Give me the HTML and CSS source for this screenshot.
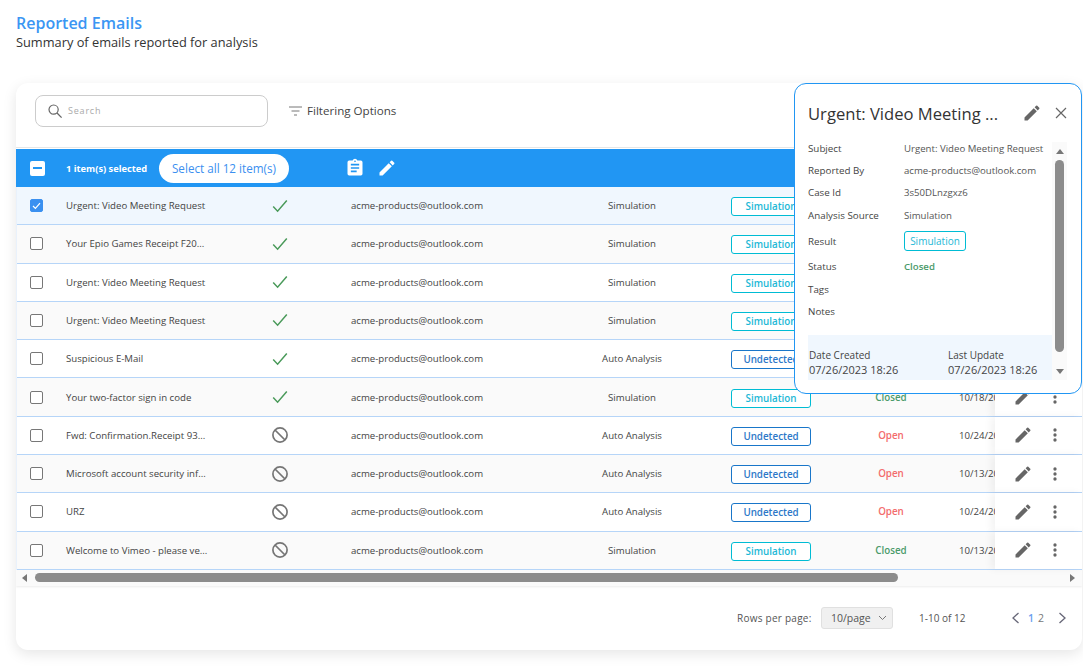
FILE: index.html
```html
<!DOCTYPE html>
<html lang="en">
<head>
<meta charset="utf-8">
<title>Reported Emails</title>
<link rel="stylesheet" href="styles.css">
</head>
<body>
<svg class="defs" width="0" height="0">
  <symbol id="i-pencil" viewBox="0 0 24 24"><path d="M3 17.25V21h3.75L17.81 9.94l-3.75-3.75L3 17.25zM20.71 7.04a1 1 0 0 0 0-1.41l-2.34-2.34a1 1 0 0 0-1.41 0l-1.83 1.83 3.75 3.75 1.83-1.83z"/></symbol>
  <symbol id="i-dots" viewBox="0 0 24 24"><path d="M12 8a2 2 0 1 0 0-4 2 2 0 0 0 0 4zm0 2a2 2 0 1 0 0 4 2 2 0 0 0 0-4zm0 6a2 2 0 1 0 0 4 2 2 0 0 0 0-4z"/></symbol>
  <symbol id="i-check" viewBox="0 0 16 14"><path d="M1.2 7.6l4.4 4.6L14.8 1.4" fill="none" stroke="#4a9a5a" stroke-width="1.5"/></symbol>
  <symbol id="i-block" viewBox="0 0 18 18"><circle cx="9" cy="9" r="7.1" fill="none" stroke="#757575" stroke-width="1.7"/><path d="M4 4l10 10" stroke="#757575" stroke-width="1.7"/></symbol>
</svg>
<header class="page-head">
  <h1>Reported Emails</h1>
  <p>Summary of emails reported for analysis</p>
</header>
<main class="card">
  <div class="toolbar">
    <div class="search">
      <svg width="16" height="16" viewBox="0 0 16 16"><circle cx="6.6" cy="6.6" r="4.6" fill="none" stroke="#666" stroke-width="1.2"/><path d="M10 10l4.6 4.6" stroke="#666" stroke-width="1.3"/></svg>
      <span>Search</span>
    </div>
    <div class="filter">
      <svg width="13" height="10" viewBox="0 0 13 10"><path d="M0 1h13M2.5 5h8M5 9h3" stroke="#777" stroke-width="1"/></svg>
      <span>Filtering Options</span>
    </div>
  </div>
  <div class="bulk">
    <span class="bulk-box"><i></i></span>
    <span class="bulk-count">1 item(s) selected</span>
    <button class="pill">Select all 12 item(s)</button>
    <svg class="bulk-clip" width="20" height="20" viewBox="0 0 24 24" fill="#fff"><path d="M19 3h-4.18A3 3 0 0 0 12 1a3 3 0 0 0-2.82 2H5a2 2 0 0 0-2 2v14a2 2 0 0 0 2 2h14a2 2 0 0 0 2-2V5a2 2 0 0 0-2-2zm-7 0a1 1 0 1 1 0 2 1 1 0 0 1 0-2zm2 14H7v-2h7v2zm3-4H7v-2h10v2zm0-4H7V7h10v2z"/></svg>
    <svg class="bulk-pen" width="20" height="20" fill="#fff"><use href="#i-pencil"/></svg>
  </div>
  <div class="rows">
    <div class="row selected">
      <span class="c-box"><span class="box on"><svg width="9" height="8" viewBox="0 0 9 8"><path d="M1 4l2.4 2.4L8 1.2" fill="none" stroke="#fff" stroke-width="1.2"/></svg></span></span>
      <span class="c-subject">Urgent: Video Meeting Request</span>
      <span class="c-flag"><svg width="16" height="14"><use href="#i-check"/></svg></span>
      <span class="c-mail">acme-products@outlook.com</span>
      <span class="c-source">Simulation</span>
      <span class="c-result"><b class="badge sim">Simulation</b></span>
      <span class="c-status closed">Closed</span>
      <span class="c-date">10/18/2023</span>
      <span class="c-act"><svg width="20" height="20"><use href="#i-pencil"/></svg><svg width="20" height="20"><use href="#i-dots"/></svg></span>
    </div>
    <div class="row">
      <span class="c-box"><span class="box"></span></span>
      <span class="c-subject">Your Epio Games Receipt F20...</span>
      <span class="c-flag"><svg width="16" height="14"><use href="#i-check"/></svg></span>
      <span class="c-mail">acme-products@outlook.com</span>
      <span class="c-source">Simulation</span>
      <span class="c-result"><b class="badge sim">Simulation</b></span>
      <span class="c-status closed">Closed</span>
      <span class="c-date">10/18/2023</span>
      <span class="c-act"><svg width="20" height="20"><use href="#i-pencil"/></svg><svg width="20" height="20"><use href="#i-dots"/></svg></span>
    </div>
    <div class="row">
      <span class="c-box"><span class="box"></span></span>
      <span class="c-subject">Urgent: Video Meeting Request</span>
      <span class="c-flag"><svg width="16" height="14"><use href="#i-check"/></svg></span>
      <span class="c-mail">acme-products@outlook.com</span>
      <span class="c-source">Simulation</span>
      <span class="c-result"><b class="badge sim">Simulation</b></span>
      <span class="c-status closed">Closed</span>
      <span class="c-date">10/18/2023</span>
      <span class="c-act"><svg width="20" height="20"><use href="#i-pencil"/></svg><svg width="20" height="20"><use href="#i-dots"/></svg></span>
    </div>
    <div class="row">
      <span class="c-box"><span class="box"></span></span>
      <span class="c-subject">Urgent: Video Meeting Request</span>
      <span class="c-flag"><svg width="16" height="14"><use href="#i-check"/></svg></span>
      <span class="c-mail">acme-products@outlook.com</span>
      <span class="c-source">Simulation</span>
      <span class="c-result"><b class="badge sim">Simulation</b></span>
      <span class="c-status closed">Closed</span>
      <span class="c-date">10/18/2023</span>
      <span class="c-act"><svg width="20" height="20"><use href="#i-pencil"/></svg><svg width="20" height="20"><use href="#i-dots"/></svg></span>
    </div>
    <div class="row">
      <span class="c-box"><span class="box"></span></span>
      <span class="c-subject">Suspicious E-Mail</span>
      <span class="c-flag"><svg width="16" height="14"><use href="#i-check"/></svg></span>
      <span class="c-mail">acme-products@outlook.com</span>
      <span class="c-source">Auto Analysis</span>
      <span class="c-result"><b class="badge und">Undetected</b></span>
      <span class="c-status closed">Closed</span>
      <span class="c-date">10/18/2023</span>
      <span class="c-act"><svg width="20" height="20"><use href="#i-pencil"/></svg><svg width="20" height="20"><use href="#i-dots"/></svg></span>
    </div>
    <div class="row">
      <span class="c-box"><span class="box"></span></span>
      <span class="c-subject">Your two-factor sign in code</span>
      <span class="c-flag"><svg width="16" height="14"><use href="#i-check"/></svg></span>
      <span class="c-mail">acme-products@outlook.com</span>
      <span class="c-source">Simulation</span>
      <span class="c-result"><b class="badge sim">Simulation</b></span>
      <span class="c-status closed">Closed</span>
      <span class="c-date">10/18/2023</span>
      <span class="c-act"><svg width="20" height="20"><use href="#i-pencil"/></svg><svg width="20" height="20"><use href="#i-dots"/></svg></span>
    </div>
    <div class="row">
      <span class="c-box"><span class="box"></span></span>
      <span class="c-subject">Fwd: Confirmation.Receipt 93...</span>
      <span class="c-flag"><svg width="18" height="18"><use href="#i-block"/></svg></span>
      <span class="c-mail">acme-products@outlook.com</span>
      <span class="c-source">Auto Analysis</span>
      <span class="c-result"><b class="badge und">Undetected</b></span>
      <span class="c-status open">Open</span>
      <span class="c-date">10/24/2023</span>
      <span class="c-act"><svg width="20" height="20"><use href="#i-pencil"/></svg><svg width="20" height="20"><use href="#i-dots"/></svg></span>
    </div>
    <div class="row">
      <span class="c-box"><span class="box"></span></span>
      <span class="c-subject">Microsoft account security inf...</span>
      <span class="c-flag"><svg width="18" height="18"><use href="#i-block"/></svg></span>
      <span class="c-mail">acme-products@outlook.com</span>
      <span class="c-source">Auto Analysis</span>
      <span class="c-result"><b class="badge und">Undetected</b></span>
      <span class="c-status open">Open</span>
      <span class="c-date">10/13/2023</span>
      <span class="c-act"><svg width="20" height="20"><use href="#i-pencil"/></svg><svg width="20" height="20"><use href="#i-dots"/></svg></span>
    </div>
    <div class="row">
      <span class="c-box"><span class="box"></span></span>
      <span class="c-subject">URZ</span>
      <span class="c-flag"><svg width="18" height="18"><use href="#i-block"/></svg></span>
      <span class="c-mail">acme-products@outlook.com</span>
      <span class="c-source">Auto Analysis</span>
      <span class="c-result"><b class="badge und">Undetected</b></span>
      <span class="c-status open">Open</span>
      <span class="c-date">10/24/2023</span>
      <span class="c-act"><svg width="20" height="20"><use href="#i-pencil"/></svg><svg width="20" height="20"><use href="#i-dots"/></svg></span>
    </div>
    <div class="row">
      <span class="c-box"><span class="box"></span></span>
      <span class="c-subject">Welcome to Vimeo - please ve...</span>
      <span class="c-flag"><svg width="18" height="18"><use href="#i-block"/></svg></span>
      <span class="c-mail">acme-products@outlook.com</span>
      <span class="c-source">Simulation</span>
      <span class="c-result"><b class="badge sim">Simulation</b></span>
      <span class="c-status closed">Closed</span>
      <span class="c-date">10/13/2023</span>
      <span class="c-act"><svg width="20" height="20"><use href="#i-pencil"/></svg><svg width="20" height="20"><use href="#i-dots"/></svg></span>
    </div>
  </div>
  <div class="hscroll">
    <i class="arrow-l"></i>
    <span class="hthumb"></span>
    <i class="arrow-r"></i>
  </div>
  <footer class="pager">
    <span class="rpp">Rows per page:</span>
    <span class="select">10/page<svg width="9" height="6" viewBox="0 0 9 6"><path d="M1 1l3.5 3.5L8 1" fill="none" stroke="#777" stroke-width="1"/></svg></span>
    <span class="range">1-10 of 12</span>
    <svg class="chev-l" width="9" height="12" viewBox="0 0 9 12"><path d="M7.5 1L2 6l5.5 5" fill="none" stroke="#667" stroke-width="1.3"/></svg>
    <span class="pg cur">1</span>
    <span class="pg">2</span>
    <svg class="chev-r" width="9" height="12" viewBox="0 0 9 12"><path d="M1.5 1L7 6l-5.5 5" fill="none" stroke="#667" stroke-width="1.3"/></svg>
  </footer>
</main>
<aside class="pop">
  <div class="pop-head">
    <h2>Urgent: Video Meeting ...</h2>
    <svg class="pop-pen" width="20" height="20"><use href="#i-pencil"/></svg>
    <svg class="pop-x" width="12" height="12" viewBox="0 0 12 12"><path d="M1 1l10 10M11 1L1 11" stroke="#666" stroke-width="1.2"/></svg>
  </div>
  <div class="pop-body">
    <div class="pop-main">
      <dl class="info">
        <dt>Subject</dt><dd>Urgent: Video Meeting Request</dd>
        <dt>Reported By</dt><dd>acme-products@outlook.com</dd>
        <dt>Case Id</dt><dd>3s50DLnzgxz6</dd>
        <dt>Analysis Source</dt><dd>Simulation</dd>
        <dt>Result</dt><dd><b class="badge mini">Simulation</b></dd>
        <dt>Status</dt><dd class="closed">Closed</dd>
        <dt>Tags</dt><dd></dd>
        <dt>Notes</dt><dd></dd>
      </dl>
      <div class="dates">
        <div class="date-col"><span>Date Created</span><span class="val">07/26/2023 18:26</span></div>
        <div class="date-col"><span>Last Update</span><span class="val">07/26/2023 18:26</span></div>
      </div>
    </div>
    <div class="vscroll"><i class="arrow-u"></i><span class="vthumb"></span><i class="arrow-d"></i></div>
  </div>
</aside>
</body>
</html>
```
FILE: styles.css
```css
* { box-sizing: border-box; }
html, body { margin: 0; height: 669px; overflow: hidden; }
body { position: relative; background: #fff; font-family: "Open Sans", "Liberation Sans", sans-serif; color: #444; font-size: 9.65px; }
.defs { position: absolute; }
.page-head { padding: 14px 16px 0; height: 83px; }
.page-head h1 { margin: 0; font-size: 16px; line-height: 19px; font-weight: 600; color: #3b96f3; }
.page-head p { margin: 0; font-size: 12.8px; line-height: 19px; color: #333; }
.card { margin-left: 16px; width: 1066px; height: 567px; background: #fff; border-radius: 12px; box-shadow: 0 4px 14px rgba(0,0,0,.1); overflow: hidden; }
.toolbar { height: 65px; display: flex; align-items: center; padding: 0 0 9px 19px; border-bottom: 1px solid #e6e6e6; }
.search { width: 233px; height: 32px; border: 1px solid #ccc; border-radius: 8px; display: flex; align-items: center; gap: 5px; padding-left: 11px; color: #aaa; font-size: 9px; letter-spacing: .8px; }
.filter { margin-left: 21px; display: flex; align-items: center; gap: 5px; color: #444; font-size: 11.6px; font-weight: 500; }
.bulk { margin-top: 1px; height: 38px; background: #2196f3; display: flex; align-items: center; color: #fff; padding-left: 14px; }
.bulk-box { width: 15px; height: 15px; background: #fff; border-radius: 2px; display: flex; align-items: center; justify-content: center; }
.bulk-box i { width: 9px; height: 1.5px; background: #2196f3; }
.bulk-count { margin-left: 21px; font-weight: 700; font-size: 9.3px; width: 93px; }
.pill { border: 0; height: 29px; width: 130px; border-radius: 15px; background: #fff; color: #3b8ff0; font: 500 11.7px "Open Sans", sans-serif; padding: 0; }
.bulk-clip { margin-left: 56px; }
.bulk-pen { margin-left: 12px; }
.rows { display: flex; flex-direction: column; border-left: 1px solid #e9f1fb; margin-top: -0.1px; }
.row { height: 38.3px; flex: none; display: grid; grid-template-columns: 49px 184px 60px 261px 122px 158px 80px 64px 87px; align-items: center; background: #fff; border-bottom: 1px solid #b6d5f8; }
.row:nth-child(even) { background: #fafafa; }
.row.selected { background: #f0f7fe; }
.c-box { display: flex; justify-content: center; padding-right: 11px; }
.box { width: 13px; height: 13px; border: 1px solid #777; border-radius: 2px; background: #fff; display: flex; align-items: center; justify-content: center; }
.box.on { background: #3a90f0; border-color: #3a90f0; }
.c-flag { display: flex; justify-content: center; }
.c-mail { padding-left: 41px; }
.c-source { text-align: center; }
.c-result { padding: 2px 0 0 38px; display: flex; }
.badge { display: inline-block; width: 80px; height: 19px; line-height: 17px; border-radius: 3px; text-align: center; border: 1px solid; font-weight: 600; background: #fff; font-size: 9.8px; }
.sim { color: #1db8d6; border-color: #00bcd4; }
.und { color: #2d78c8; border-color: #1976c9; }
.c-status { text-align: center; font-weight: 600; font-size: 9.8px; }
.closed { color: #4b9a6a; }
.open { color: #f36c6c; }
.c-date { padding-left: 28px; white-space: nowrap; overflow: hidden; }
.c-act { height: 100%; background: #fff; box-shadow: -4px 0 8px rgba(0,0,0,.05); display: flex; align-items: center; padding-left: 18px; gap: 12px; fill: #666; }
.hscroll { height: 16px; background: #fafafa; display: flex; align-items: center; padding-left: 6px; box-shadow: 0 1px 2px rgba(0,0,0,.08); }
.arrow-l { width: 0; height: 0; border: 4px solid transparent; border-left: 0; border-right: 5px solid #777; }
.arrow-r { width: 0; height: 0; border: 4px solid transparent; border-right: 0; border-left: 5px solid #777; margin-left: 172px; }
.hthumb { margin-left: 8px; width: 863px; height: 9px; border-radius: 5px; background: #8c8c8c; }
.pager { height: 65px; display: flex; align-items: center; padding-left: 721px; color: #555; font-size: 10px; }
.rpp { width: 84px; letter-spacing: .25px; }
.select { width: 72px; height: 22px; background: #f0f0f0; border: 1px solid #e0e0e0; border-radius: 3px; display: flex; align-items: center; justify-content: space-between; padding: 0 5px 0 9px; font-size: 10.5px; }
.range { margin-left: 26px; width: 92px; }
.chev-l { margin-right: 6px; }
.pg { width: 10px; text-align: center; color: #777; font-size: 10.5px; }
.pg.cur { color: #6d9ff0; font-weight: 600; }
.chev-r { margin-left: 12px; }
.pop { position: absolute; left: 794px; top: 83px; width: 288px; height: 311px; background: #fff; border: 1px solid #2196f3; border-radius: 12px; padding: 0 13px; z-index: 5; }
.pop-head { height: 53px; padding-top: 5px; display: flex; align-items: center; }
.pop-head h2 { margin: 0; font-size: 16.6px; font-weight: 500; color: #333; width: 214px; white-space: nowrap; }
.pop-pen { fill: #666; }
.pop-x { margin-left: 13px; }
.pop-body { display: flex; }
.pop-main { width: 244px; flex: none; }
.info { margin: 0; display: grid; grid-template-columns: 96px 1fr; grid-template-rows: 22px 22px 23px 22px 30px 21px 24px 21px; align-items: center; height: 198px; align-content: start; font-size: 9.8px; }
.info dt { color: #444; }
.info dd { margin: 0; color: #555; white-space: nowrap; font-size: 9.65px; }
.info dd.closed { color: #4b9a6a; font-weight: 600; }
.mini { width: 62px; height: 20px; line-height: 18px; color: #1db8d6; border-color: #00bcd4; font-weight: 500; font-size: 10px; }
.dates { height: 45px; background: #f0f7fe; display: flex; padding: 13px 1px 0; font-size: 10px; }
.date-col { flex: none; width: 139px; display: flex; flex-direction: column; }
.date-col .val { font-size: 11px; line-height: 16px; }
.date-col span:first-child { line-height: 14px; }
.vscroll { width: 15px; height: 238px; margin-top: 5px; background: #fafafa; display: flex; flex-direction: column; align-items: center; }
.arrow-u { margin-top: 7px; width: 0; height: 0; border: 4px solid transparent; border-top: 0; border-bottom: 5px solid #777; }
.arrow-d { margin-top: 17px; width: 0; height: 0; border: 4px solid transparent; border-bottom: 0; border-top: 5px solid #777; }
.vthumb { margin-top: 6px; width: 9px; height: 192px; border-radius: 5px; background: #8c8c8c; flex: none; }
```
